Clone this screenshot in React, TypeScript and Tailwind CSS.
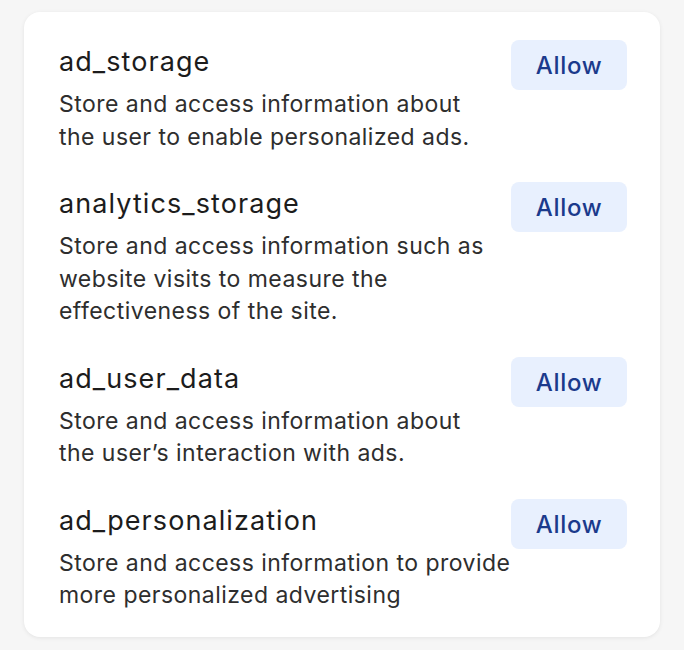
import React from 'react';

const items = [
    { name: 'ad_storage', lines: ['Store and access information about', 'the user to enable personalized ads.'] },
    { name: 'analytics_storage', lines: ['Store and access information such as', 'website visits to measure the', 'effectiveness of the site.'] },
    { name: 'ad_user_data', lines: ['Store and access information about', 'the user\u2019s interaction with ads.'] },
    { name: 'ad_personalization', lines: ['Store and access information to provide', 'more personalized advertising'] },
];

const App = () => {
    return (
        <div className="min-h-screen w-full bg-[#f6f6f6] px-6 pt-3 font-['Inter',sans-serif]">
            <div className="flex w-[636px] flex-col gap-[33px] rounded-2xl bg-white pb-[25px] pl-[35px] pr-[33px] pt-[32px] shadow-[0_1px_4px_rgba(0,0,0,0.08)]">
                {items.map((item) => (
                    <div key={item.name} className="flex items-start justify-between">
                        <div className="flex flex-col gap-[8px]">
                            <h2 className="text-[27px] leading-9 tracking-[0.04em] text-[#1c1c1c]">{item.name}</h2>
                            <p className="text-[23px] leading-[32.5px] tracking-[0.02em] text-[#2e2e2e]">
                                {item.lines.map((line, i) => (
                                    <span key={i} className="block">{line}</span>
                                ))}
                            </p>
                        </div>
                        <button className="mt-[-4px] h-[50px] w-[116px] shrink-0 rounded-lg bg-[#e8f0fe] pt-[2px] text-[24px] font-medium tracking-[0.03em] text-[#1b3a8c]">
                            Allow
                        </button>
                    </div>
                ))}
            </div>
        </div>
    );
};

export default App;
